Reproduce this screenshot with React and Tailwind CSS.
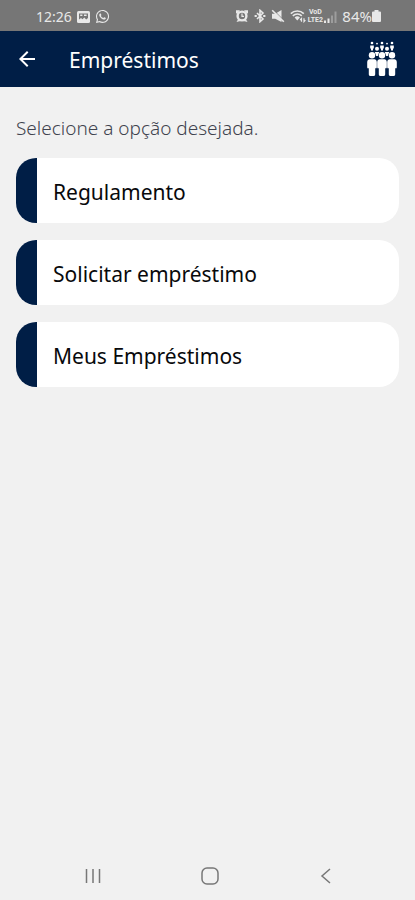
import { FaWhatsapp } from 'react-icons/fa';
import { MdArrowBack } from 'react-icons/md';

const options = [
  { id: 'regulamento', label: 'Regulamento' },
  { id: 'solicitar', label: 'Solicitar empréstimo' },
  { id: 'meus', label: 'Meus Empréstimos' },
];

function GalleryIcon() {
  return (
    <svg viewBox="0 0 13 12" className="h-3 w-[13px]" aria-hidden="true">
      <rect width="13" height="12" rx="1.5" fill="currentColor" />
      <path d="M2 2.500h9v4.500L9.200 8.600 7.300 6.600 5.500 8.200 4 7 2 8.500z" fill="#767676" />
      <path d="M3.200 4.200h2.200M7 4.200h2.600" stroke="currentColor" strokeWidth="1.400" />
    </svg>
  );
}

function AlarmIcon() {
  return (
    <svg viewBox="0 0 14 14" className="size-[14px]" aria-hidden="true">
      <path d="M1 1.200h4L2 4.800 1 4zM13 1.200H9L12 4.800l1-.8zM1.500 13l2-3.500 2 2.500zM12.500 13l-2-3.500-2 2.500z" fill="currentColor" />
      <circle cx="7" cy="7" r="4.400" fill="none" stroke="currentColor" strokeWidth="2.400" />
      <path d="M7 4.600V7.400H9" fill="none" stroke="currentColor" strokeWidth="1.200" />
    </svg>
  );
}

function BluetoothIcon() {
  return (
    <svg viewBox="0 0 12 14" className="h-[14px] w-3" fill="none" stroke="currentColor" strokeWidth="1.600" aria-hidden="true">
      <path d="M3 4l6 6-3 2.700V1.300L9 4l-6 6" />
      <path d="M.6 7h2.200M9.200 7h2.200" strokeWidth="2" />
    </svg>
  );
}

function MuteIcon() {
  return (
    <svg viewBox="0 0 14 14" className="size-[14px]" aria-hidden="true">
      <path d="M1 4.800h3.200L10.500 1v12L4.200 9.700H1z" fill="currentColor" />
      <path d="M2.200 .8l11.300 11.300" stroke="#767676" strokeWidth="1" />
      <path d="M1.200 1.200l11.600 11.600" stroke="currentColor" strokeWidth="1.600" />
    </svg>
  );
}

function WifiIcon() {
  return (
    <svg viewBox="0 0 16 14" className="h-[14px] w-4" fill="none" stroke="currentColor" aria-hidden="true">
      <path d="M.8 4.600a9.500 9.500 0 0 1 13 0" strokeWidth="1.600" />
      <path d="M2.800 6.800a6.600 6.600 0 0 1 9 0" strokeWidth="1.600" />
      <path d="M4.600 8.400a4 4 0 0 1 5.400 0L7.300 11.500z" fill="currentColor" stroke="none" />
      <path d="M11.500 12.800V9.500l-1.400 1.500M14 9.300v3.300l1.400-1.500" strokeWidth="1.200" />
    </svg>
  );
}

function SignalIcon() {
  return (
    <svg viewBox="0 0 13 13" className="h-[13px] w-[13px]" fill="currentColor" aria-hidden="true">
      <path d="M0 10.500h2V13H0zM3.500 8.500h2V13h-2z" />
      <path d="M7 5.500h2V13H7zM10.500 1.500h2V13h-2z" opacity=".35" />
    </svg>
  );
}

function BatteryIcon() {
  return (
    <svg viewBox="0 0 9 12" className="h-3 w-[9px]" fill="currentColor" aria-hidden="true">
      <path d="M2.500 0h4v1.500H8a1 1 0 0 1 1 1V11a1 1 0 0 1-1 1H1a1 1 0 0 1-1-1V2.500a1 1 0 0 1 1-1h1.500z" />
    </svg>
  );
}

function Person({ x, y }) {
  return (
    <g transform={`translate(${x} ${y})`}>
      <circle cx="0" cy="3.200" r="3.200" />
      <path d="M-2.600 7.200H2.600Q4.600 7.600 4.800 9.800V15.500Q4.200 17 3.200 16V22.500Q3 24 1.600 24H-1.600Q-3 24-3.200 22.500V16Q-4.200 17-4.800 15.500V9.800Q-4.600 7.600-2.600 7.200Z" />
    </g>
  );
}

function PeopleLogo() {
  return (
    <svg viewBox="0 0 30 36" className="h-9 w-[30px]" fill="currentColor" role="img" aria-label="Associados">
      {[5, 15, 25].map((x) => (
        <g key={x}>
          <circle cx={x} cy="2" r="1.300" />
          <path d={`M${x - 1.8} 4.400h3.600v3h-.8v2h-2v-2h-.8z`} />
        </g>
      ))}
      {[10, 20].map((x) => (
        <g key={x}>
          <circle cx={x} cy="2.600" r=".9" />
          <circle cx={x} cy="7.800" r="2" />
          <path d={`M${x - 2.2} 11h4.400l-1.400 4h-1.600z`} />
        </g>
      ))}
      <Person x={5} y={11} />
      <Person x={15} y={11} />
      <Person x={25} y={11} />
    </svg>
  );
}

function StatusBar() {
  return (
    <div className="flex h-[31px] items-center justify-between bg-[#767676] pt-0.5 pr-[34px] pl-9 text-sm text-[#e8e8e8]">
      <div className="flex items-center gap-[5px]">
        <span>12:26</span>
        <GalleryIcon />
        <FaWhatsapp size={15} />
      </div>
      <div className="flex items-center gap-[5px]">
        <AlarmIcon />
        <BluetoothIcon />
        <MuteIcon />
        <div className="flex items-center">
          <WifiIcon />
          <span className="flex w-[18px] flex-col items-center font-['Roboto',sans-serif] text-[7px] leading-[8px] font-bold">
            <span>VoD</span>
            <span>LTE2</span>
          </span>
          <SignalIcon />
        </div>
        <div className="flex items-center">
          <span className="text-[15px]">84%</span>
          <BatteryIcon />
        </div>
      </div>
    </div>
  );
}

function Header() {
  return (
    <header className="flex h-14 items-center bg-[#001e46] pr-[18px] pl-[15px] text-white">
      <button type="button" aria-label="Voltar">
        <MdArrowBack size={24} />
      </button>
      <h1 className="ml-[30px] flex-1 pt-0.5 text-[21px] leading-7">Empréstimos</h1>
      <PeopleLogo />
    </header>
  );
}

function OptionButton({ label }) {
  return (
    <button
      type="button"
      className="flex w-full overflow-hidden rounded-[20px] bg-white text-left text-[21px] leading-[25px] text-[#08090c]"
    >
      <span className="w-[21px] shrink-0 self-stretch bg-[#001e46]" />
      <span className="px-4 pt-[22px] pb-[18px]">{label}</span>
    </button>
  );
}

function NavBar() {
  return (
    <nav className="flex h-12 items-center justify-between pr-[81px] pl-[85px] text-[#777777]">
      <button type="button" aria-label="Recentes">
        <svg viewBox="0 0 16 16" className="size-4" stroke="currentColor" strokeWidth="1.500">
          <path d="M1.500 1v14M8 1v14M14.500 1v14" />
        </svg>
      </button>
      <button type="button" aria-label="Início">
        <svg viewBox="0 0 18 18" className="size-[18px]" fill="none" stroke="currentColor" strokeWidth="1.500">
          <rect x="1" y="1" width="16" height="16" rx="5" />
        </svg>
      </button>
      <button type="button" aria-label="Voltar à tela anterior">
        <svg viewBox="0 0 16 16" className="size-4" fill="none" stroke="currentColor" strokeWidth="1.500">
          <path d="M12 1L4 8l8 7" />
        </svg>
      </button>
    </nav>
  );
}

export default function App() {
  return (
    <div className="flex min-h-screen flex-col bg-[#f1f1f1] font-['Noto_Sans',sans-serif]">
      <StatusBar />
      <Header />
      <main className="flex-1 px-4 pt-7">
        <p className="text-[19px] leading-[26px] font-light text-[#3f434e]">Selecione a opção desejada.</p>
        <div className="mt-[17px] flex flex-col gap-[17px]">
          {options.map((o) => (
            <OptionButton key={o.id} label={o.label} />
          ))}
        </div>
      </main>
      <NavBar />
    </div>
  );
}
